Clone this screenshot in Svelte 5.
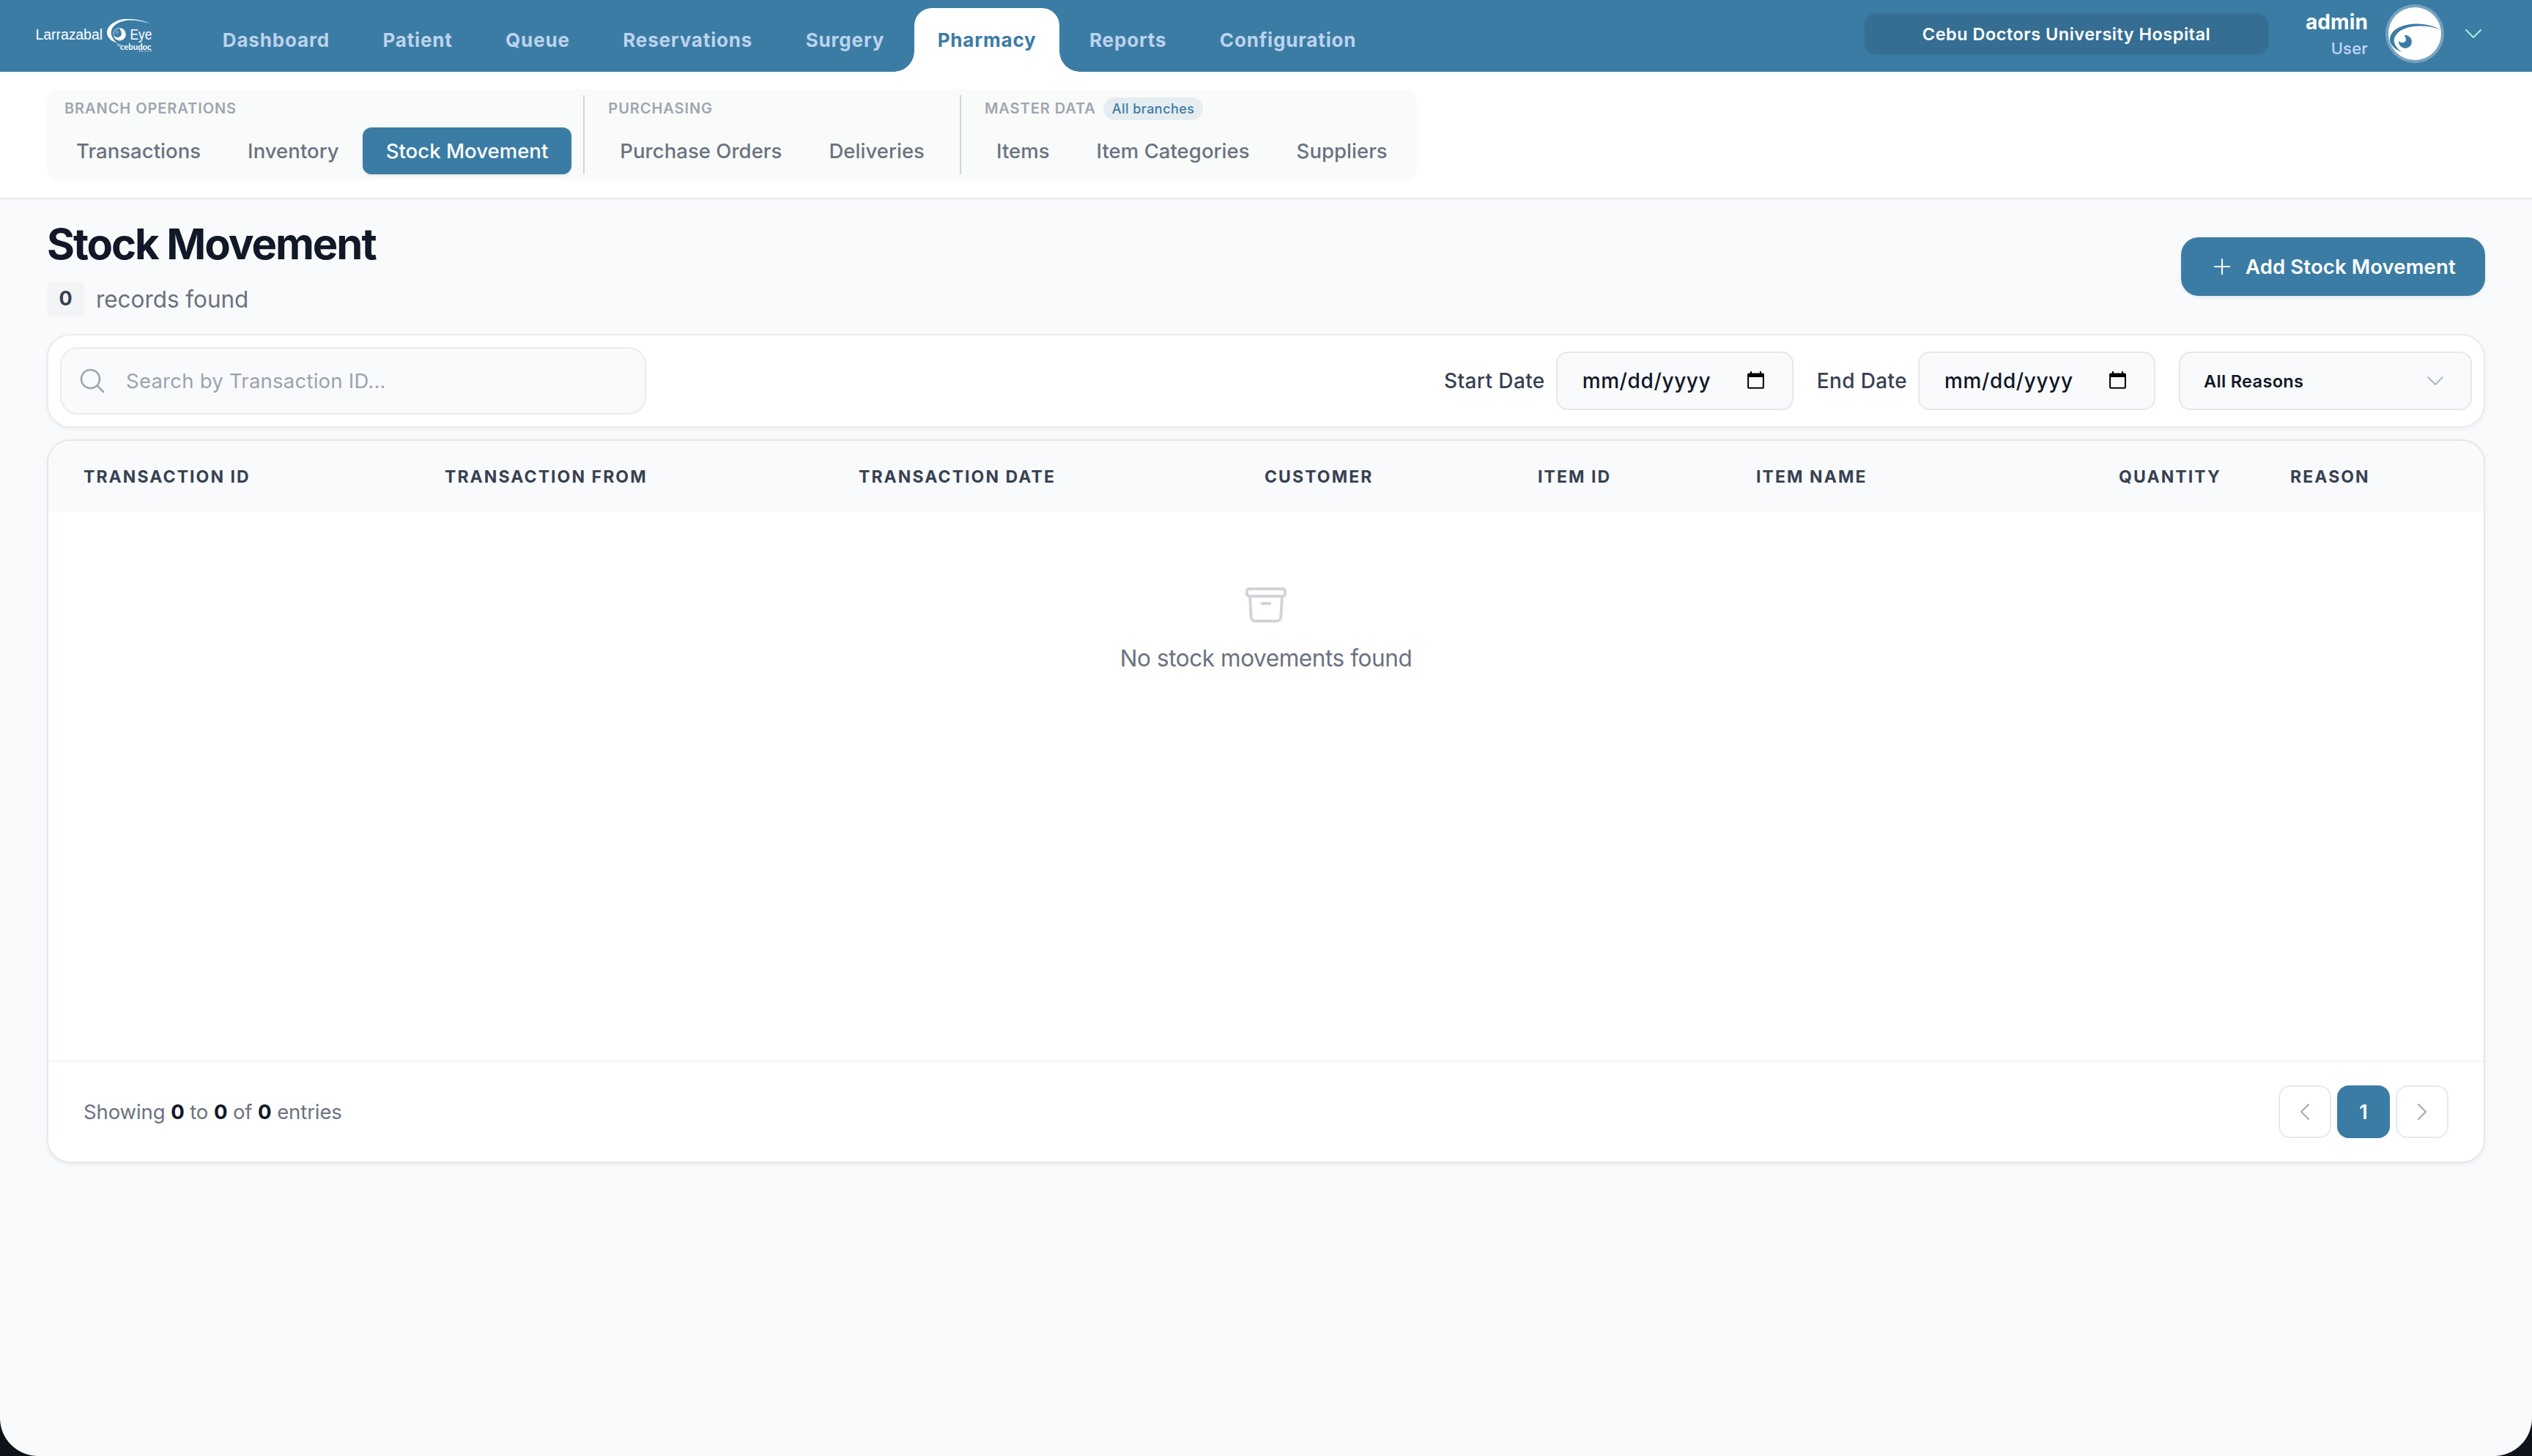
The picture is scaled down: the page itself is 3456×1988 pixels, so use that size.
<script lang="ts">
	type NavGroup = {
		label: string;
		badge?: string;
		items: string[];
	};

	const navItems = [
		'Dashboard',
		'Patient',
		'Queue',
		'Reservations',
		'Surgery',
		'Pharmacy',
		'Reports',
		'Configuration'
	];

	const navGroups: NavGroup[] = [
		{ label: 'Branch Operations', items: ['Transactions', 'Inventory', 'Stock Movement'] },
		{ label: 'Purchasing', items: ['Purchase Orders', 'Deliveries'] },
		{
			label: 'Master Data',
			badge: 'All branches',
			items: ['Items', 'Item Categories', 'Suppliers']
		}
	];

	const columns = [
		{ label: 'Transaction ID', width: 493 },
		{ label: 'Transaction From', width: 565 },
		{ label: 'Transaction Date', width: 554 },
		{ label: 'Customer', width: 373 },
		{ label: 'Item ID', width: 298 },
		{ label: 'Item Name', width: 495 },
		{ label: 'Quantity', width: 234, right: true },
		{ label: 'Reason', width: 312 }
	];

	let activeNav = $state('Pharmacy');
	let activeItem = $state('Stock Movement');
	let search = $state('');
	let total = $state(0);
</script>

{#snippet dateField(label: string)}
	<div class="date-field">
		<span class="date-label">{label}</span>
		<div class="date-input">
			<span>mm/dd/yyyy</span>
			<svg class="calendar" viewBox="0 0 23 24" aria-hidden="true">
				<path d="M1.1 5h20.8v16.8a1 1 0 0 1-1 1H2.1a1 1 0 0 1-1-1z" fill="none" stroke="#000" stroke-width="2" />
				<path d="M0 4.5a2 2 0 0 1 2-2h2V0h2v2.5h11V0h2v2.5h2a2 2 0 0 1 2 2V8H0z" />
			</svg>
		</div>
	</div>
{/snippet}

<div class="page">
	<header class="topbar">
		<svg class="logo" viewBox="0 0 200 80" aria-label="Larrazabal Eye">
			<text x="18.5" y="44.3" font-size="19.5" textLength="91.5">Larrazabal</text>
			<text x="147.5" y="44.3" font-size="19.5" textLength="30" lengthAdjust="spacingAndGlyphs">Eye</text>
			<text class="logo-bold" x="134" y="58" font-size="11.8" textLength="42.5" lengthAdjust="spacingAndGlyphs">cebudoc</text>
			<text x="130" y="53" font-size="4.5">by</text>
			<text x="159" y="60.8" font-size="3" textLength="18">GROUP</text>
			<path d="M174 22C164 17 152 15.5 140 16 127 17.2 116 25 116 34.5c0 6.5 6 11.8 14 14.5-5.5-5-8.3-9.5-8.3-14.3 0-8.7 8.6-15 21.3-17 11-.8 21 1.2 31 4.3z" />
			<path d="M133 28.3a8.6 8.6 0 1 1-8.3 8.7c1.5 3.3 4.3 4.8 7.6 3.7 3.6-1.3 4.4-5.2 2.7-8.3-.8-1.6-1.7-3-2-4.1z" />
			<path d="M133 28.3c-5 .3-8.3 4-8.3 8.7" fill="none" stroke="#fff" stroke-width="0.8" />
			<ellipse cx="129.5" cy="33.8" rx="2" ry="2.8" fill-opacity=".25" />
		</svg>

		<nav class="main-nav">
			{#each navItems as item}
				<button class="nav-item" class:active={item === activeNav} onclick={() => (activeNav = item)}>
					{item}
				</button>
			{/each}
		</nav>

		<div class="account">
			<div class="branch">Cebu Doctors University Hospital</div>
			<div class="user">
				<span class="user-name">admin</span>
				<span class="user-role">User</span>
			</div>
			<svg class="avatar" viewBox="0 0 80 80" aria-hidden="true">
				<circle cx="40" cy="40" r="40" fill="#fff" fill-opacity=".3" />
				<circle cx="40" cy="40" r="36" fill="#fff" />
				<path d="M73.3 33.7C64 28.3 52.3 26.6 42.3 26.6 24 26.7 6 34 6 48.3c0 7.3 7.3 13.4 16 16.7-6.3-5-10.3-10.4-10.3-16C12.7 39 24 30.7 42.3 29.7 54 29 64 30.7 73.3 33.7z" />
				<path d="M25.7 42a9 9 0 1 1-7.7 8c2.6 2.3 4.6 2.6 6.7 2 3.3-1 3.6-4 2.9-6-.5-1.5-1.5-2.8-1.9-4z" />
			</svg>
			<svg class="chevron-user" viewBox="0 0 24 24" aria-hidden="true">
				<path d="m19.5 8.25-7.5 7.5-7.5-7.5" />
			</svg>
		</div>
	</header>

	<div class="subnav-bar">
		<div class="subnav">
			{#each navGroups as group}
				<section class="group">
					<div class="group-label">
						{group.label}
						{#if group.badge}<span class="badge">{group.badge}</span>{/if}
					</div>
					<div class="group-items">
						{#each group.items as item}
							<button
								class="sub-item"
								class:selected={item === activeItem}
								onclick={() => (activeItem = item)}>{item}</button
							>
						{/each}
					</div>
				</section>
			{/each}
		</div>
	</div>

	<main>
		<div class="heading">
			<div>
				<h1>Stock Movement</h1>
				<div class="records"><span class="count">{total}</span>records found</div>
			</div>
			<button class="add">
				<svg viewBox="0 0 24 24" aria-hidden="true"><path d="M12 4.5v15m7.5-7.5h-15" /></svg>
				Add Stock Movement
			</button>
		</div>

		<div class="filters">
			<label class="search">
				<svg viewBox="0 0 24 24" aria-hidden="true">
					<path d="m21 21-5.197-5.197m0 0A7.5 7.5 0 1 0 5.196 5.196a7.5 7.5 0 0 0 10.607 10.607Z" />
				</svg>
				<input type="text" placeholder="Search by Transaction ID..." bind:value={search} />
			</label>
			<div class="filter-fields">
				{@render dateField('Start Date')}
				{@render dateField('End Date')}
				<div class="select">
					<span>All Reasons</span>
					<svg viewBox="0 0 24 24" aria-hidden="true"><path d="m19.5 8.25-7.5 7.5-7.5-7.5" /></svg>
				</div>
			</div>
		</div>

		<div class="table-card">
			<table>
				<thead>
					<tr>
						{#each columns as column}
							<th class:right={column.right} style="width: {column.width}px">{column.label}</th>
						{/each}
					</tr>
				</thead>
			</table>

			<div class="empty">
				<svg viewBox="0 0 24 24" aria-hidden="true">
					<path d="m20.25 7.5-.625 10.632a2.25 2.25 0 0 1-2.247 2.118H6.622a2.25 2.25 0 0 1-2.247-2.118L3.75 7.5M10 11.25h4M3.375 7.5h17.25c.621 0 1.125-.504 1.125-1.125v-1.5c0-.621-.504-1.125-1.125-1.125H3.375c-.621 0-1.125.504-1.125 1.125v1.5c0 .621.504 1.125 1.125 1.125Z" />
				</svg>
				<p>No stock movements found</p>
			</div>

			<footer>
				<div class="showing">
					Showing <b>{total}</b> to <b>{total}</b> of <b>{total}</b> entries
				</div>
				<div class="pager">
					<button class="page-btn" aria-label="Previous">
						<svg viewBox="0 0 24 24"><path d="M15.75 19.5 8.25 12l7.5-7.5" /></svg>
					</button>
					<button class="page-btn current">1</button>
					<button class="page-btn" aria-label="Next">
						<svg viewBox="0 0 24 24"><path d="m8.25 4.5 7.5 7.5-7.5 7.5" /></svg>
					</button>
				</div>
			</footer>
		</div>
	</main>
</div>

<style>
	:global(body) {
		margin: 0;
		background: #10121a;
	}

	.page {
		--primary: #3b7ca5;
		--primary-dark: #356e92;
		min-height: 1988px;
		box-sizing: border-box;
		overflow: hidden;
		border-radius: 0 0 52px 52px;
		background: #f9fafc;
		color: #111827;
		font-family: Inter, 'Noto Sans', sans-serif;
	}

	.page * {
		box-sizing: border-box;
	}

	button {
		border: 0;
		background: none;
		font: inherit;
		white-space: nowrap;
	}

	svg {
		display: block;
		flex: none;
	}

	/* Top bar */
	.topbar {
		display: flex;
		align-items: flex-start;
		height: 98px;
		padding: 0 64px 0 30px;
		background: var(--primary);
	}

	.logo {
		width: 200px;
		height: 80px;
		margin-top: 10px;
		fill: #fff;
		font-family: 'Liberation Sans', sans-serif;
	}

	.logo-bold {
		font-family: Lato, sans-serif;
		font-weight: 700;
	}

	.main-nav {
		display: flex;
		gap: 8.8px;
		margin: 11px 0 0 42px;
	}

	.nav-item {
		position: relative;
		height: 87px;
		padding: 0 31.8px 1px;
		color: #bcd3ec;
		font-size: 26px;
		font-weight: 700;
		letter-spacing: 0.84px;
	}

	.nav-item.active {
		border-radius: 24px 24px 0 0;
		background: #fff;
		color: var(--primary);
	}

	/* Flared feet of the active tab */
	.nav-item.active::before,
	.nav-item.active::after {
		content: '';
		position: absolute;
		bottom: 0;
		width: 28px;
		height: 28px;
	}

	.nav-item.active::before {
		right: 100%;
		background: radial-gradient(circle at 0 0, transparent 27.5px, #fff 28px);
	}

	.nav-item.active::after {
		left: 100%;
		background: radial-gradient(circle at 100% 0, transparent 27.5px, #fff 28px);
	}

	.account {
		display: flex;
		align-items: flex-start;
		margin-left: auto;
	}

	.branch {
		width: 553px;
		height: 57px;
		margin-top: 18px;
		border: 2px solid #377298;
		border-radius: 16px;
		background: var(--primary-dark);
		color: #fff;
		font-size: 23.5px;
		font-weight: 600;
		line-height: 54px;
		letter-spacing: 0.5px;
		text-align: center;
	}

	.user {
		display: flex;
		flex-direction: column;
		align-items: flex-end;
		width: 135px;
		padding-top: 12px;
	}

	.user-name {
		color: #fff;
		font-size: 28px;
		font-weight: 700;
		line-height: 36px;
		letter-spacing: 0.1px;
	}

	.user-role {
		color: #c3d7fb;
		font-size: 22px;
		font-weight: 500;
		line-height: 36px;
		letter-spacing: 0.2px;
	}

	.avatar {
		width: 80px;
		height: 80px;
		margin: 6px 24px 0;
		fill: var(--primary);
	}

	.chevron-user {
		width: 32px;
		height: 32px;
		margin-top: 30px;
		fill: none;
		stroke: #9ff3df;
		stroke-width: 1.5;
		stroke-linecap: round;
		stroke-linejoin: round;
	}

	/* Section navigation */
	.subnav-bar {
		height: 174px;
		padding: 24px 64px 0;
		border-bottom: 2px solid #e5e7eb;
		background: #fff;
	}

	.subnav {
		display: inline-flex;
		height: 124px;
		padding: 8px;
		border-radius: 16px;
		background: #f9fbfa;
	}

	.group + .group {
		margin-left: 16px;
		padding-left: 16px;
		border-left: 2px solid #d1d5db;
	}

	.group-label {
		display: flex;
		align-items: center;
		height: 36px;
		padding-left: 16px;
		color: #a0a5b1;
		font-size: 20px;
		font-weight: 600;
		letter-spacing: 0.93px;
		text-transform: uppercase;
	}

	.badge {
		height: 31px;
		margin-left: 10px;
		padding: 0 12px;
		border-radius: 16px;
		background: #e6edf1;
		color: var(--primary);
		font-size: 18px;
		font-weight: 500;
		line-height: 31px;
		letter-spacing: 0.45px;
		text-transform: none;
	}

	.group-items {
		display: flex;
		margin-top: 8px;
	}

	.sub-item {
		height: 64px;
		padding: 0 32px;
		border-radius: 12px;
		color: #6b7280;
		font-size: 27.5px;
		font-weight: 500;
		letter-spacing: 0.04px;
	}

	.sub-item.selected {
		background: var(--primary);
		box-shadow: 0 2px 4px rgb(0 0 0 / 8%);
		color: #fff;
	}

	/* Page heading */
	main {
		padding: 0 64px;
	}

	.heading {
		display: flex;
		justify-content: space-between;
		height: 184px;
	}

	h1 {
		margin: 24px 0 0;
		font-size: 58px;
		font-weight: 700;
		line-height: 74px;
		letter-spacing: -2.06px;
	}

	.records {
		display: flex;
		align-items: center;
		margin-top: 14px;
		color: #6b7280;
		font-size: 31.5px;
		letter-spacing: -0.04px;
	}

	.count {
		width: 51px;
		height: 48px;
		margin-right: 16px;
		border-radius: 8px;
		background: #f3f4f6;
		color: #374151;
		font-size: 27px;
		font-weight: 700;
		line-height: 48px;
		text-align: center;
	}

	.add {
		display: flex;
		align-items: center;
		gap: 16px;
		width: 415px;
		height: 80px;
		margin-top: 52px;
		padding: 0 0 0 40px;
		border-radius: 24px;
		background: var(--primary);
		box-shadow: 0 2px 4px rgb(0 0 0 / 8%);
		color: #fff;
		font-size: 27.5px;
		font-weight: 600;
		letter-spacing: 0.12px;
	}

	.add svg {
		width: 32px;
		height: 32px;
		fill: none;
		stroke: #fff;
		stroke-width: 1.5;
		stroke-linecap: round;
	}

	/* Filters */
	.filters {
		display: flex;
		align-items: center;
		justify-content: space-between;
		height: 128px;
		padding: 0 16px;
		border: 2px solid #e9ebef;
		border-radius: 32px;
		background: #fff;
		box-shadow: 0 2px 6px rgb(0 0 0 / 5%);
	}

	.search {
		display: flex;
		align-items: center;
		gap: 26px;
		width: 800px;
		height: 92px;
		padding-left: 22px;
		border: 2px solid #e9ebef;
		border-radius: 24px;
		background: #f9fafc;
	}

	.search svg {
		width: 40px;
		height: 40px;
		fill: none;
		stroke: #9ca3af;
		stroke-width: 1.5;
		stroke-linecap: round;
	}

	.search input {
		flex: 1;
		min-width: 0;
		padding: 0;
		border: 0;
		background: none;
		font: 400 27.5px Inter, sans-serif;
		letter-spacing: 0.24px;
	}

	.search input::placeholder {
		color: #9ca3af;
	}

	.filter-fields,
	.date-field {
		display: flex;
		align-items: center;
	}

	.date-field {
		margin-right: 32px;
	}

	.date-label {
		margin-right: 15px;
		color: #374151;
		font-size: 28px;
		font-weight: 500;
		letter-spacing: 0.38px;
	}

	.date-input,
	.select {
		display: flex;
		align-items: center;
		justify-content: space-between;
		height: 80px;
		border: 2px solid #e5e7eb;
		border-radius: 16px;
		background: #f9fafc;
		font-weight: 500;
	}

	.date-input {
		width: 324px;
		padding: 0 38px 0 34px;
		font-size: 28px;
		letter-spacing: 0.62px;
	}

	.calendar {
		width: 23px;
		height: 24px;
		margin-bottom: 2px;
	}

	.select {
		width: 400px;
		padding: 0 32px;
		font-size: 23.5px;
		font-weight: 600;
		letter-spacing: 0.35px;
	}

	.select svg {
		width: 32px;
		height: 32px;
		fill: none;
		stroke: #9ca3af;
		stroke-width: 1.2;
		stroke-linecap: round;
		stroke-linejoin: round;
	}

	/* Table */
	.table-card {
		display: flex;
		flex-direction: column;
		height: 988px;
		margin-top: 16px;
		overflow: hidden;
		border: 2px solid #e5e7eb;
		border-radius: 32px;
		background: #fff;
		box-shadow: 0 2px 6px rgb(0 0 0 / 6%);
	}

	table {
		width: 100%;
		table-layout: fixed;
		border-collapse: collapse;
	}

	th {
		height: 96px;
		padding: 2px 48px 0;
		background: #f9fafc;
		color: #374151;
		font-size: 23px;
		font-weight: 700;
		letter-spacing: 2.08px;
		text-align: left;
		text-transform: uppercase;
		white-space: nowrap;
	}

	th.right {
		text-align: right;
	}

	.empty {
		display: flex;
		flex: 1;
		flex-direction: column;
		align-items: center;
		padding-top: 96px;
		color: #6b7280;
		font-size: 31.5px;
		letter-spacing: -0.42px;
	}

	.empty svg {
		width: 64px;
		height: 64px;
		fill: none;
		stroke: #d1d5db;
		stroke-width: 1.5;
		stroke-linecap: round;
		stroke-linejoin: round;
	}

	.empty p {
		margin: 17px 0 0;
		line-height: 48px;
	}

	footer {
		display: flex;
		align-items: center;
		justify-content: space-between;
		height: 138px;
		padding: 0 48px;
		border-top: 2px solid #f3f4f6;
	}

	.showing {
		color: #6b7280;
		font-size: 27.5px;
		letter-spacing: -0.1px;
	}

	.showing b {
		color: #111827;
		font-weight: 700;
	}

	.pager {
		display: flex;
		gap: 8px;
	}

	.page-btn {
		display: grid;
		place-items: center;
		width: 72px;
		height: 72px;
		padding: 0;
		border: 2px solid #e8e9ee;
		border-radius: 16px;
		background: #fff;
	}

	.page-btn svg {
		width: 32px;
		height: 32px;
		fill: none;
		stroke: #a3a6ab;
		stroke-width: 1.5;
		stroke-linecap: round;
		stroke-linejoin: round;
	}

	.page-btn.current {
		border-color: var(--primary);
		background: var(--primary);
		color: #fff;
		font-size: 27px;
		font-weight: 600;
	}
</style>
